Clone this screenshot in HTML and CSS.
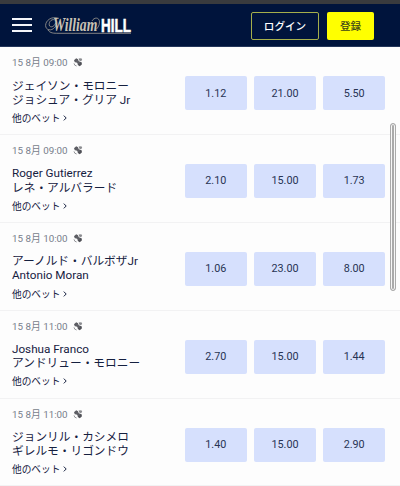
FILE: index.html
```
<!DOCTYPE html>
<html lang="ja">
<head>
  <meta charset="UTF-8">
  <meta name="viewport" content="width=device-width, initial-scale=1.0">
  <title>William Hill</title>
  <link rel="stylesheet" href="styles.css">
</head>
<body>
  <!-- Shared live icon -->
  <svg class="symbols" width="0" height="0">
    <symbol id="multi" viewBox="0 0 10 10">
      <path d="M1 3.2 3.2 1.2 5 2.2 5.4 4 4 5.6 1.8 5.2Z" fill="#5c5d63"/>
      <path d="M4.6 5.8 6.6 4.4 8.8 5.6 8.8 7.6 6.8 9.2 4.8 8Z" fill="#505157"/>
      <path d="M5.6 1.6 8.4 1.2 9.2 2.8 8 4.2 6.2 3.6Z" fill="#8b8c90"/>
      <path d="M3.4 3.4 6.6 6.6" stroke="#606167" stroke-width="2.4"/>
      <path d="M1 6.4 1.8 8.2 3.6 9" fill="none" stroke="#88898d" stroke-width=".9"/>
    </symbol>
  </svg>

  <header class="header">
    <button class="menu-btn" aria-label="Menu"><span></span><span></span><span></span></button>
    <svg class="logo" viewBox="0 0 96 22" width="96" height="22">
      <g fill="none" stroke="#a39e94" stroke-width=".8">
        <path d="M14 2.4C6 -.4 .6 5 .6 9.4c0 5 6 6 9 2 3-3 3-7 0-7.6C6 2.6 3 7 4.6 10c2 2 5 0 6-3"/>
        <path d="M3 14c2 3.3 6 3.3 10 3.3h73"/>
        <path d="M47 5c2-4 7.5-4 7.5 1 0 3.5-2 7-5 8.5"/>
      </g>
      <text class="logo-script" transform="translate(8 15) scale(.76 1)">William</text>
      <text class="logo-hill" transform="translate(56 15.5) scale(.71 1)">HILL</text>
    </svg>
    <button class="login-btn">ログイン</button>
    <button class="join-btn">登録</button>
  </header>

  <main class="events">
    <div class="event">
      <div class="time">15 8月 09:00 <svg class="icon"><use href="#multi"/></svg></div>
      <div class="names">ジェイソン・モロニー<br>ジョシュア・グリア Jr</div>
      <div class="more">他のベット <svg class="arrow" viewBox="0 0 4 6"><path d="M.8.6 3.2 3 .8 5.4"/></svg></div>
      <div class="odds"><button>1.12</button><button>21.00</button><button>5.50</button></div>
    </div>
    <div class="event">
      <div class="time">15 8月 09:00 <svg class="icon"><use href="#multi"/></svg></div>
      <div class="names">Roger Gutierrez<br>レネ・アルバラード</div>
      <div class="more">他のベット <svg class="arrow" viewBox="0 0 4 6"><path d="M.8.6 3.2 3 .8 5.4"/></svg></div>
      <div class="odds"><button>2.10</button><button>15.00</button><button>1.73</button></div>
    </div>
    <div class="event">
      <div class="time">15 8月 10:00 <svg class="icon"><use href="#multi"/></svg></div>
      <div class="names">アーノルド・バルボザJr<br>Antonio Moran</div>
      <div class="more">他のベット <svg class="arrow" viewBox="0 0 4 6"><path d="M.8.6 3.2 3 .8 5.4"/></svg></div>
      <div class="odds"><button>1.06</button><button>23.00</button><button>8.00</button></div>
    </div>
    <div class="event">
      <div class="time">15 8月 11:00 <svg class="icon"><use href="#multi"/></svg></div>
      <div class="names">Joshua Franco<br>アンドリュー・モロニー</div>
      <div class="more">他のベット <svg class="arrow" viewBox="0 0 4 6"><path d="M.8.6 3.2 3 .8 5.4"/></svg></div>
      <div class="odds"><button>2.70</button><button>15.00</button><button>1.44</button></div>
    </div>
    <div class="event">
      <div class="time">15 8月 11:00 <svg class="icon"><use href="#multi"/></svg></div>
      <div class="names">ジョンリル・カシメロ<br>ギレルモ・リゴンドウ</div>
      <div class="more">他のベット <svg class="arrow" viewBox="0 0 4 6"><path d="M.8.6 3.2 3 .8 5.4"/></svg></div>
      <div class="odds"><button>1.40</button><button>15.00</button><button>2.90</button></div>
    </div>
  </main>

  <div class="scrollbar"></div>
</body>
</html>
```
FILE: styles.css
```
* {
  box-sizing: border-box;
}

body {
  margin: 0;
  height: 486px;
  overflow: hidden;
  position: relative;
  background-color: #fdfdfd;
  color: #15203f;
  font-family: Roboto, "Noto Sans CJK JP", sans-serif;
}

button {
  margin: 0;
  padding: 0;
  font-family: inherit;
  cursor: pointer;
}

.symbols {
  display: block;
}

/* Top bar */
.header {
  display: flex;
  align-items: center;
  height: 47px;
  padding: 1px 26px 0 12px;
  background-color: #00143c;
  border-top: 4px solid #393b3e;
  border-bottom: 1px solid #24365a;
}

.menu-btn {
  display: flex;
  flex-direction: column;
  justify-content: space-between;
  width: 20px;
  height: 14px;
  margin-top: -1px;
  background: none;
  border: none;
}

.menu-btn span {
  height: 2px;
  width: 100%;
  background-color: #f4f6fa;
}

.logo {
  margin: 2px auto 0 13px;
}

.logo-script {
  font: italic bold 18px "Liberation Serif", serif;
  fill: #c9c2b4;
}

.logo-hill {
  font: bold 19px "Liberation Sans", sans-serif;
  fill: #fff;
  stroke: #fff;
  stroke-width: 0.6px;
}

.login-btn,
.join-btn {
  height: 28px;
  font-size: 10.6px;
  font-weight: 500;
  border-radius: 2px;
}

.login-btn {
  width: 68px;
  margin-right: 8px;
  background: none;
  border: 1px solid #a5af4b;
  color: #fff;
}

.join-btn {
  width: 47px;
  background-color: #ff0;
  border: none;
  color: #3c4418;
}

/* Match rows */
.event {
  display: grid;
  grid-template-columns: 173px 1fr;
  grid-template-rows: 18px 32px 20px;
  height: 87.9px;
  padding: 6px 15px 0 12px;
  border-bottom: 1px solid #f2f2f3;
}

.time {
  display: flex;
  align-items: center;
  gap: 3px;
  font-size: 9.8px;
  color: #777d8b;
  white-space: pre;
}

.icon {
  width: 10px;
  height: 10px;
}

.names {
  grid-row: 2;
  padding-top: 7.5px;
  font-size: 11.7px;
  line-height: 14.2px;
  white-space: nowrap;
}

.more {
  grid-row: 3;
  display: flex;
  align-items: center;
  gap: 3px;
  padding-top: 9.5px;
  font-size: 9.7px;
}

.arrow {
  width: 4px;
  height: 6px;
  fill: none;
  stroke: #15203f;
}

.odds {
  grid-column: 2;
  grid-row: 1 / 4;
  display: grid;
  grid-template-columns: repeat(3, 1fr);
  gap: 7.5px;
  height: 34px;
  margin-top: 23px;
}

.odds button {
  background-color: #d6e0fd;
  border: none;
  border-radius: 2px;
  color: #283454;
  font-size: 10.8px;
}

/* Scroll indicator floats over the list */
.scrollbar {
  position: absolute;
  top: 123px;
  right: 4px;
  width: 6px;
  height: 168px;
  background-color: #aaa;
  border: 1px solid #aaa;
  border-radius: 3px;
  box-shadow: inset 0 0 0 1px #f7f7f7;
}
```
